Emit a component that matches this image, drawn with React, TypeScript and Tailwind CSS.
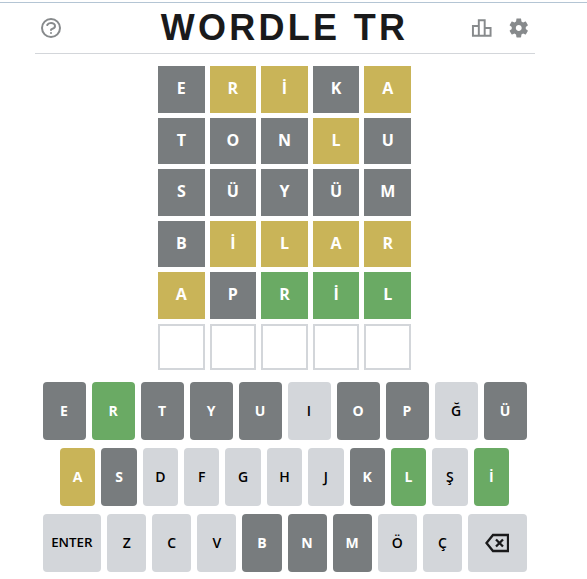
import React from "react";

const G = "bg-[#787c7e] text-white font-bold";
const Y = "bg-[#c9b458] text-white font-bold";
const N = "bg-[#6aaa64] text-white font-bold";
const L = "bg-[#d3d6da] text-black font-semibold";

const TG = "bg-[#787c7e] text-white";
const TY = "bg-[#c9b458] text-white";
const TN = "bg-[#6aaa64] text-white";

const rows: [string, string][][] = [
  [["E", TG], ["R", TY], ["İ", TY], ["K", TG], ["A", TY]],
  [["T", TG], ["O", TG], ["N", TG], ["L", TY], ["U", TG]],
  [["S", TG], ["Ü", TG], ["Y", TG], ["Ü", TG], ["M", TG]],
  [["B", TG], ["İ", TY], ["L", TY], ["A", TY], ["R", TY]],
  [["A", TY], ["P", TG], ["R", TN], ["İ", TN], ["L", TN]],
];

const k1: [string, string][] = [["E", G], ["R", N], ["T", G], ["Y", G], ["U", G], ["I", L], ["O", G], ["P", G], ["Ğ", L], ["Ü", G]];
const k2: [string, string][] = [["A", Y], ["S", G], ["D", L], ["F", L], ["G", L], ["H", L], ["J", L], ["K", G], ["L", N], ["Ş", L], ["İ", N]];
const k3: [string, string][] = [["Z", L], ["C", L], ["V", L], ["B", G], ["N", G], ["M", G], ["Ö", L], ["Ç", L]];

function Key({ label, cls }: { label: string; cls: string }) {
  return (
    <button className={`flex h-[58px] min-w-0 flex-1 items-center justify-center rounded font-['Open_Sans',sans-serif] text-sm ${cls}`}>
      {label}
    </button>
  );
}

export default function App() {
  return (
    <div className="h-[579px] overflow-hidden bg-white pt-[2px] font-['Liberation_Sans',sans-serif]">
      <div className="h-px bg-[#b4c5d4]" />
      <div className="w-[569px]">
        <div className="mx-auto w-[500px]">
          <header className="flex h-[51px] items-center justify-between border-b border-[#d3d6da] px-[4px]">
            <div className="flex w-[60px] items-center">
              <svg width="24" height="24" viewBox="0 0 24 24" fill="none" stroke="#878a8c" strokeWidth="2" strokeLinecap="round" strokeLinejoin="round">
                <path d="M8.228 9c.549-1.165 2.03-2 3.772-2 2.21 0 4 1.343 4 3 0 1.4-1.278 2.575-3.006 2.907-.542.104-.994.54-.994 1.093m0 3h.01M21 12a9 9 0 11-18 0 9 9 0 0118 0z" />
              </svg>
            </div>
            <h1 className="text-[36px] leading-none font-bold tracking-[3.3px] text-[#1a1a1b]">WORDLE TR</h1>
            <div className="flex w-[60px] items-center justify-end gap-[13px]">
              <svg width="24" height="24" viewBox="0 0 24 24" fill="#878a8c">
                <path d="M16 11V3H8v6H2v12h20V11h-6zm-6-6h4v14h-4V5zm-6 6h4v8H4v-8zm16 8h-4v-6h4v6z" />
              </svg>
              <svg width="24" height="24" viewBox="0 0 24 24" fill="#878a8c">
                <path fillRule="evenodd" d="M19.14 12.94c.04-.3.06-.61.06-.94 0-.32-.02-.64-.07-.94l2.03-1.58c.18-.14.23-.41.12-.61l-1.92-3.32c-.12-.22-.37-.29-.59-.22l-2.39.96c-.5-.38-1.03-.7-1.62-.94l-.36-2.54c-.04-.24-.24-.41-.48-.41h-3.84c-.24 0-.43.17-.47.41l-.36 2.54c-.59.24-1.13.57-1.62.94l-2.39-.96c-.22-.08-.47 0-.59.22L2.74 8.87c-.12.21-.08.47.12.61l2.03 1.58c-.05.3-.09.63-.09.94s.02.64.07.94l-2.03 1.58c-.18.14-.23.41-.12.61l1.92 3.32c.12.22.37.29.59.22l2.39-.96c.5.38 1.03.7 1.62.94l.36 2.54c.05.24.24.41.48.41h3.84c.24 0 .44-.17.47-.41l.36-2.54c.59-.24 1.13-.56 1.62-.94l2.39.96c.22.08.47 0 .59-.22l1.92-3.32c.12-.22.07-.47-.12-.61l-2.01-1.58zM12 15c-1.65 0-3-1.35-3-3s1.35-3 3-3 3 1.35 3 3-1.35 3-3 3z" />
              </svg>
            </div>
          </header>
        </div>
        <div className="mx-auto mt-[12px] grid h-[304px] w-[253px] grid-cols-5 grid-rows-6 gap-[5px]">
          {rows.flat().map(([c, cls], i) => (
            <div key={i} className={`flex items-center justify-center pb-[2px] font-['Open_Sans',sans-serif] text-base font-bold ${cls}`}>{c}</div>
          ))}
          {Array.from({ length: 5 }).map((_, i) => (
            <div key={i} className="border-2 border-[#d3d6da]" />
          ))}
        </div>
        <div className="mx-auto mt-[12px] flex w-[484px] flex-col gap-[8px]">
          <div className="flex gap-[6px]">
            {k1.map(([c, cls], i) => <Key key={i} label={c} cls={cls} />)}
          </div>
          <div className="flex gap-[6px] px-[17.5px]">
            {k2.map(([c, cls], i) => <Key key={i} label={c} cls={cls} />)}
          </div>
          <div className="flex gap-[6px]">
            <button className={`flex h-[58px] min-w-0 flex-[1.5] items-center justify-center rounded font-['Open_Sans',sans-serif] text-[13.33px] ${L}`}>ENTER</button>
            {k3.map(([c, cls], i) => <Key key={i} label={c} cls={cls} />)}
            <button className={`flex h-[58px] min-w-0 flex-[1.5] items-center justify-center rounded ${L}`}>
              <svg width="24" height="24" viewBox="0 0 24 24" fill="none" stroke="#1a1a1b" strokeWidth="2.3">
                <path d="M8 4h15v16H8L1.5 12z" />
                <path d="M11 8.5l7 7m0-7l-7 7" />
              </svg>
            </button>
          </div>
        </div>
      </div>
    </div>
  );
}
